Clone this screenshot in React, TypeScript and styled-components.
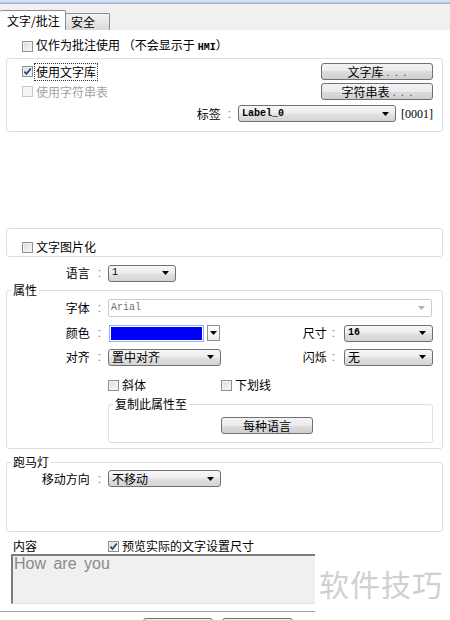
import React from "react";
import styled, { createGlobalStyle } from "styled-components";

const GlobalStyle = createGlobalStyle`
  html, body {
    margin: 0;
    padding: 0;
    background: #fff;
  }
  body {
    font-family: "Noto Sans CJK SC", "Liberation Sans", sans-serif;
    font-size: 12px;
    line-height: 14px;
    color: #000;
  }
`;

const Page = styled.div`
  width: 450px;
  height: 620px;
  overflow: hidden;
  background: #fff;
  display: flex;
  flex-direction: column;
  & > * {
    flex-shrink: 0;
  }
`;

const TitleEdge = styled.div`
  height: 3px;
  background: linear-gradient(#dbe7f5, #b7cde6);
  border-bottom: 1px solid #9fb2c8;
`;

const TabStrip = styled.div`
  height: 26px;
  background: #f0f0f0;
  display: flex;
  align-items: flex-end;
`;

const Tab = styled.div<{ $active?: boolean }>`
  box-sizing: border-box;
  height: ${(p) => (p.$active ? 20 : 17)}px;
  width: ${(p) => (p.$active ? 66 : 45)}px;
  padding-left: ${(p) => (p.$active ? 7 : 5)}px;
  border: 1px solid #898c95;
  border-bottom: none;
  border-left: ${(p) => (p.$active ? "none" : "1px solid #898c95")};
  margin-left: ${(p) => (p.$active ? 0 : -1)}px;
  border-radius: 2px 2px 0 0;
  background: ${(p) =>
    p.$active ? "#fff" : "linear-gradient(#f3f3f3, #e6e6e6 50%, #d9d9d9)"};
  display: flex;
  align-items: center;
  white-space: nowrap;
`;

const Sheet = styled.div`
  padding: 0 7px 0 6px;
  display: flex;
  flex-direction: column;
  & > * {
    flex-shrink: 0;
  }
`;

const NoteRow = styled.div`
  margin-top: 10px;
  height: 13px;
  padding-left: 16px;
  display: flex;
  align-items: center;
`;

const Small = styled.span`
  font-family: "Liberation Mono", monospace;
  font-size: 10px;
  font-weight: bold;
  margin-left: 3px;
`;

const Panel = styled.div<{ $mt: number; $h: number }>`
  margin-top: ${(p) => p.$mt}px;
  height: ${(p) => p.$h}px;
  box-sizing: border-box;
  border: 1px solid #dcdfe3;
  border-radius: 3px;
`;

const LibraryGrid = styled.div`
  padding: 4px 9px 0 15px;
  display: grid;
  grid-template-columns: 1fr 112px;
  grid-template-rows: 17px 17px 16px;
  row-gap: 3px;
  align-items: center;
`;

const TagRow = styled.div`
  grid-column: 1 / -1;
  justify-self: end;
  margin-top: 5px;
  display: flex;
  align-items: center;
`;

const Code = styled.span`
  font-family: "Liberation Serif", serif;
  font-size: 12px;
  color: #000;
  margin-left: 5px;
`;

const PictureRow = styled.div`
  padding: 11px 0 0 15px;
`;

const Group = styled.fieldset<{ $mt: number; $pad: string; $span?: string }>`
  margin: ${(p) => p.$mt}px 0 0;
  padding: ${(p) => p.$pad};
  border: 1px solid #dcdfe3;
  border-radius: 3px;
  min-width: 0;
  grid-column: ${(p) => p.$span || "auto"};
`;

const Legend = styled.legend`
  margin-left: 4px;
  padding: 0 2px;
  line-height: 14px;
  font-size: 12px;
`;

const FormRow = styled.div<{ $mt?: number; $h?: number; $pl?: number }>`
  display: grid;
  grid-template-columns: 101px 113px 123px 89px;
  align-items: center;
  margin-top: ${(p) => p.$mt || 0}px;
  height: ${(p) => p.$h || 18}px;
  padding-left: ${(p) => p.$pl || 0}px;
`;

const FieldLabel = styled.div<{ $align?: string }>`
  display: flex;
  justify-content: ${(p) => p.$align || "flex-end"};
  align-items: center;
  white-space: nowrap;
`;

const Colon = styled.span<{ $l: number; $r: number }>`
  font-family: "Liberation Sans", sans-serif;
  color: #7a7a7a;
  margin: 0 ${(p) => p.$r}px 0 ${(p) => p.$l}px;
`;

const SelectBox = styled.div<{ $w?: number }>`
  box-sizing: border-box;
  width: ${(p) => (p.$w ? `${p.$w}px` : "auto")};
  height: 17px;
  border: 1px solid #707070;
  border-radius: 3px;
  background: linear-gradient(#f7f7f7 0%, #ededed 45%, #e0e0e0 55%, #d4d4d4 100%);
  padding: 0 6px 0 3px;
  display: flex;
  align-items: center;
  justify-content: space-between;
`;

const SelectText = styled.span<{ $mono?: boolean; $bold?: boolean }>`
  font-family: ${(p) =>
    p.$mono
      ? `"Liberation Mono", monospace`
      : `"Noto Sans CJK SC", sans-serif`};
  font-size: ${(p) => (p.$mono ? 10 : 12)}px;
  font-weight: ${(p) => (p.$bold ? "bold" : "normal")};
  white-space: nowrap;
`;

const FontField = styled.div`
  grid-column: 2 / 5;
  margin-right: 1px;
  box-sizing: border-box;
  height: 18px;
  border: 1px solid #c9ccd2;
  border-radius: 2px;
  background: #fff;
  padding: 0 6px 0 2px;
  display: flex;
  align-items: center;
  justify-content: space-between;
  color: #707070;
  font-family: "Liberation Mono", monospace;
  font-size: 10px;
`;

const ColorPick = styled.div`
  display: flex;
  align-items: center;
  height: 17px;
`;

const Swatch = styled.div`
  box-sizing: border-box;
  width: 95px;
  height: 17px;
  border: 1px solid #8fb6dc;
  padding: 1px;
  margin-left: 1px;
  background: #fff;
  & > div {
    height: 100%;
    background: #0000ff;
  }
`;

const DropButton = styled.div`
  box-sizing: border-box;
  width: 13px;
  height: 16px;
  margin-left: 3px;
  border: 1px solid #8e8f8f;
  background: linear-gradient(#ffffff, #ececec);
  display: flex;
  align-items: center;
  justify-content: center;
`;

const Button = styled.button<{ $w: number }>`
  box-sizing: border-box;
  width: ${(p) => p.$w}px;
  height: 17px;
  padding: 0;
  border: 1px solid #707070;
  border-radius: 3px;
  background: linear-gradient(#f2f2f2 0%, #ebebeb 50%, #dddddd 50%, #cfcfcf 100%);
  font: 12px/14px "Noto Sans CJK SC", sans-serif;
  color: #000;
  display: flex;
  align-items: center;
  justify-content: center;
`;

const Dots = styled.span`
  font-family: "Liberation Sans", sans-serif;
  letter-spacing: 5px;
  color: #555;
  margin-left: 3px;
  margin-right: -5px;
`;

const CopyGrid = styled.div`
  padding: 6px 0 8px 112px;
`;

const Check = styled.label<{ $disabled?: boolean }>`
  display: inline-flex;
  align-items: center;
  gap: 3px;
  white-space: nowrap;
  color: ${(p) => (p.$disabled ? "#a3a3a3" : "#000")};
`;

const Box = styled.span<{ $disabled?: boolean }>`
  box-sizing: border-box;
  width: 11px;
  height: 11px;
  flex: none;
  border: 1px solid ${(p) => (p.$disabled ? "#c7c7c7" : "#8e8f8f")};
  background: ${(p) =>
    p.$disabled ? "#f4f4f4" : "linear-gradient(135deg, #d9d9d9, #fbfbfb)"};
  box-shadow: inset 0 0 0 1px ${(p) => (p.$disabled ? "#f7f7f7" : "#f2f2f2")};
  display: inline-flex;
  align-items: center;
  justify-content: center;
`;

const Focus = styled.span`
  outline: 1px dotted #333;
  outline-offset: 1px;
`;

const Lower = styled.div`
  display: flex;
  margin: 1px 0 0 -6px;
`;

const LeftCol = styled.div`
  width: 315px;
  flex: none;
`;

const TextBox = styled.div`
  margin-left: 11px;
  height: 50px;
  box-sizing: border-box;
  border-top: 2px solid #7b7b7b;
  border-left: 2px solid #7b7b7b;
  border-bottom: 1px solid #e2e2e2;
  background: #f0f0f0;
  padding: 1px 0 0 1px;
  font-family: "Liberation Sans", sans-serif;
  font-size: 16px;
  line-height: 14px;
  word-spacing: 3px;
  color: #8a8a8a;
`;

const BottomBar = styled.div`
  margin-top: 7px;
  border-top: 1px solid #a0a0a0;
  padding: 6px 0 0 143px;
  display: flex;
  gap: 9px;
`;

const BarButton = styled.button<{ $w: number }>`
  width: ${(p) => p.$w}px;
  height: 22px;
  border: 1px solid #707070;
  border-radius: 3px;
  background: linear-gradient(#f2f2f2, #dddddd);
  padding: 0;
`;

const Watermark = styled.div`
  margin: 12px 0 0 4px;
  font-family: "Noto Sans CJK SC", sans-serif;
  font-size: 30px;
  line-height: 34px;
  letter-spacing: 1px;
  color: #d0d0d0;
  white-space: nowrap;
`;

const Arrow: React.FC<{ color?: string }> = ({ color = "#000" }) => (
  <svg width="7" height="4" viewBox="0 0 7 4">
    <path d="M0 0H7L3.5 4Z" fill={color} />
  </svg>
);

const CheckBox: React.FC<{
  checked?: boolean;
  disabled?: boolean;
  children: React.ReactNode;
}> = ({ checked, disabled, children }) => (
  <Check $disabled={disabled}>
    <Box $disabled={disabled}>
      {checked && (
        <svg width="9" height="9" viewBox="0 0 9 9">
          <path
            d="M1.4 4.6L3.5 7 7.8 1.5"
            fill="none"
            stroke="#22407f"
            strokeWidth="1.7"
          />
        </svg>
      )}
    </Box>
    {children}
  </Check>
);

const Select: React.FC<{
  value: string;
  w?: number;
  mono?: boolean;
  bold?: boolean;
}> = ({ value, w, mono, bold }) => (
  <SelectBox $w={w}>
    <SelectText $mono={mono} $bold={bold}>
      {value}
    </SelectText>
    <Arrow />
  </SelectBox>
);

const Label: React.FC<{ text: string; right?: boolean }> = ({ text, right }) => (
  <FieldLabel>
    {text}
    {right ? <Colon $l={5} $r={9}>:</Colon> : <Colon $l={8} $r={7}>:</Colon>}
  </FieldLabel>
);

export default function App() {
  return (
    <Page>
      <GlobalStyle />
      <TitleEdge />
      <TabStrip>
        <Tab $active>文字/批注</Tab>
        <Tab>安全</Tab>
      </TabStrip>

      <Sheet>
        <NoteRow>
          <CheckBox>
            <span>
              仅作为批注使用 （不会显示于<Small>HMI</Small>）
            </span>
          </CheckBox>
        </NoteRow>

        <Panel $mt={5} $h={74}>
          <LibraryGrid>
            <CheckBox checked>
              <Focus>使用文字库</Focus>
            </CheckBox>
            <Button $w={112}>
              文字库<Dots>...</Dots>
            </Button>
            <CheckBox disabled>使用字符串表</CheckBox>
            <Button $w={112}>
              字符串表<Dots>...</Dots>
            </Button>
            <TagRow>
              标签
              <Colon $l={7} $r={7}>:</Colon>
              <Select value="Label_0" w={158} mono bold />
              <Code>[0001]</Code>
            </TagRow>
          </LibraryGrid>
        </Panel>

        <Panel $mt={96} $h={29}>
          <PictureRow>
            <CheckBox>文字图片化</CheckBox>
          </PictureRow>
        </Panel>

        <FormRow $mt={7} $pl={1}>
          <Label text="语言" />
          <Select value="1" w={68} mono />
        </FormRow>

        <Group $mt={1} $pad="2px 9px 5px 0">
          <Legend>属性</Legend>
          <FormRow>
            <Label text="字体" />
            <FontField>
              Arial
              <Arrow color="#b0b0b0" />
            </FontField>
          </FormRow>
          <FormRow $mt={7}>
            <Label text="颜色" />
            <ColorPick>
              <Swatch>
                <div />
              </Swatch>
              <DropButton>
                <Arrow />
              </DropButton>
            </ColorPick>
            <Label text="尺寸" right />
            <Select value="16" mono bold />
          </FormRow>
          <FormRow $mt={6}>
            <Label text="对齐" />
            <Select value="置中对齐" />
            <Label text="闪烁" right />
            <Select value="无" />
          </FormRow>
          <FormRow $mt={12} $h={14}>
            <span />
            <CheckBox>斜体</CheckBox>
            <CheckBox>下划线</CheckBox>
          </FormRow>
          <FormRow $h={51}>
            <span />
            <Group $mt={5} $pad="0 0 0 0" $span="2 / 5">
              <Legend>复制此属性至</Legend>
              <CopyGrid>
                <Button $w={92}>每种语言</Button>
              </CopyGrid>
            </Group>
          </FormRow>
        </Group>

        <Group $mt={6} $pad="1px 9px 44px 0">
          <Legend>跑马灯</Legend>
          <FormRow $h={17}>
            <Label text="移动方向" />
            <Select value="不移动" />
          </FormRow>
        </Group>

        <FormRow $mt={7} $h={14} $pl={1}>
          <FieldLabel $align="flex-start">
            <span style={{ paddingLeft: 6 }}>内容</span>
          </FieldLabel>
          <CheckBox checked>预览实际的文字设置尺寸</CheckBox>
        </FormRow>

        <Lower>
          <LeftCol>
            <TextBox>How are you</TextBox>
            <BottomBar>
              <BarButton $w={70} aria-label="确定" />
              <BarButton $w={71} aria-label="取消" />
            </BottomBar>
          </LeftCol>
          <Watermark>软件技巧</Watermark>
        </Lower>
      </Sheet>
    </Page>
  );
}
